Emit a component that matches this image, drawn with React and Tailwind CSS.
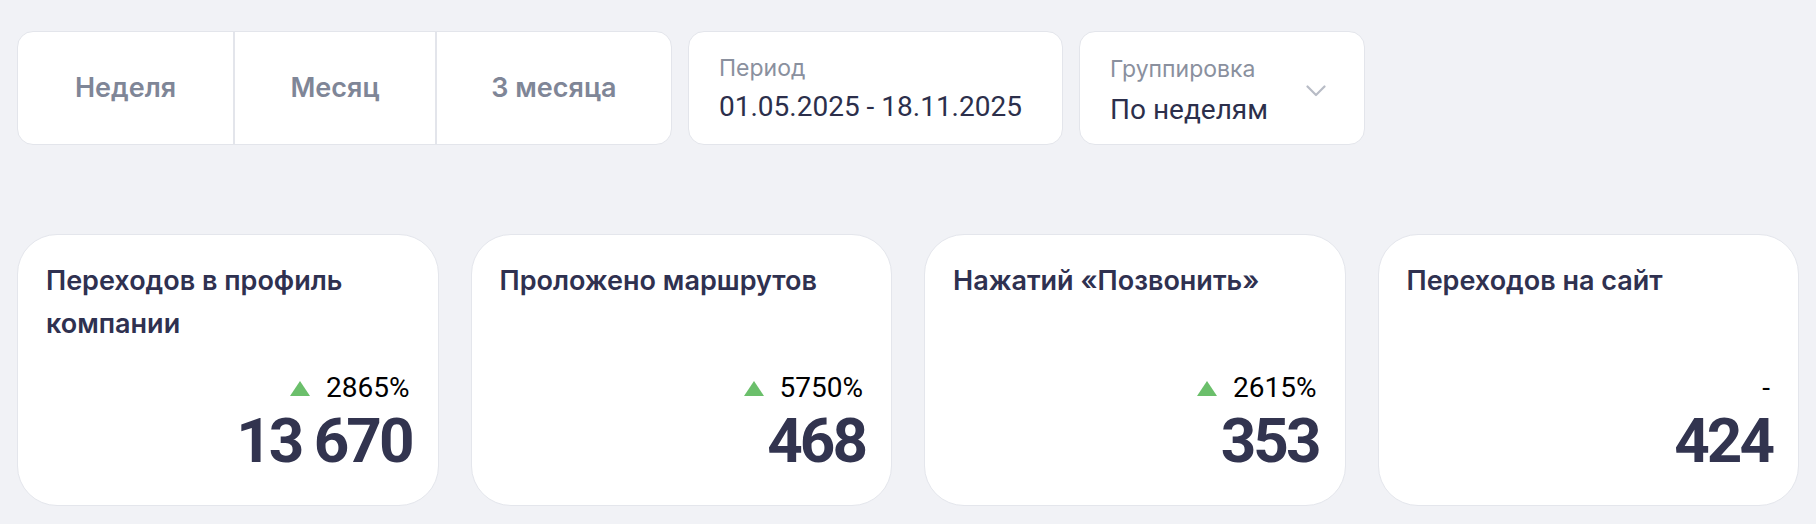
import React from "react";

const font = { fontFamily: "Inter, 'Noto Sans', sans-serif" };
const roboto = { fontFamily: "Roboto, 'Noto Sans', sans-serif" };

function Segment() {
  const items = [
    { label: "Неделя", w: "w-[215px]" },
    { label: "Месяц", w: "w-[202px]" },
    { label: "3 месяца", w: "w-[236px]" },
  ];
  return (
    <div className="flex h-[114px] rounded-[16px] border border-[#e3e5eb] bg-white overflow-hidden">
      {items.map((it, i) => (
        <div
          key={it.label}
          className={`${it.w} flex items-center justify-center text-[27px] font-semibold text-[#7f8697] ${
            i > 0 ? "border-l-2 border-[#e3e5eb]" : ""
          }`}
        >
          {it.label}
        </div>
      ))}
    </div>
  );
}

function Field({ label, value, w, chevron }) {
  return (
    <div
      className={`${w} h-[114px] rounded-[16px] border border-[#e3e5eb] bg-white pl-[30px] pr-[38px] ${
        chevron ? "pt-[21px]" : "pt-[20px]"
      } flex items-start justify-between`}
    >
      <div className="flex flex-col">
        <div className="text-[23px] leading-[32px] text-[#8a909e] whitespace-nowrap">{label}</div>
        <div
          style={roboto}
          className={`${chevron ? "mt-[7px]" : "mt-[5px]"} text-[28px] leading-[36px] text-[#2c2f4b] whitespace-nowrap`}
        >
          {value}
        </div>
      </div>
      {chevron && (
        <svg className="mt-[32px]" width="20" height="12" viewBox="0 0 20 12" fill="none">
          <path d="M1.5 1.5 L10 10 L18.5 1.5" stroke="#b8bcc6" strokeWidth="2.2" strokeLinecap="round" strokeLinejoin="round" />
        </svg>
      )}
    </div>
  );
}

function Card({ title, pct, value }) {
  return (
    <div className="h-[272px] rounded-[40px] border border-[#e4e6ec] bg-white px-[28px] pt-[24px] pb-[28px] flex flex-col">
      <div className="text-[27px] leading-[43px] font-semibold text-[#2f3150]">{title}</div>
      <div className="mt-auto flex flex-col items-end">
        <div className="flex items-center h-[32px]">
          {pct && (
            <svg width="20" height="15" viewBox="0 0 20 15" className="mr-[16px]">
              <polygon points="10,0 20,15 0,15" fill="#6bbf6b" />
            </svg>
          )}
          <span style={roboto} className="text-[28px] leading-[32px] text-black">{pct || "-"}</span>
        </div>
        <div
          style={roboto}
          className="text-[62px] leading-[73px] font-bold tracking-[-3px] mr-[-2px] text-[#32344f] whitespace-nowrap"
        >
          {value}
        </div>
      </div>
    </div>
  );
}

export default function App() {
  return (
    <div style={font} className="w-[1816px] h-[524px] bg-[#f1f2f6] px-[17px] pt-[31px]">
      <div className="flex gap-4">
        <Segment />
        <Field label="Период" value="01.05.2025 - 18.11.2025" w="w-[375px]" />
        <Field label="Группировка" value="По неделям" w="w-[286px]" chevron />
      </div>
      <div className="mt-[89px] grid grid-cols-4 gap-8">
        <Card title="Переходов в профиль компании" pct="2865%" value="13 670" />
        <Card title="Проложено маршрутов" pct="5750%" value="468" />
        <Card title="Нажатий «Позвонить»" pct="2615%" value="353" />
        <Card title="Переходов на сайт" pct={null} value="424" />
      </div>
    </div>
  );
}
